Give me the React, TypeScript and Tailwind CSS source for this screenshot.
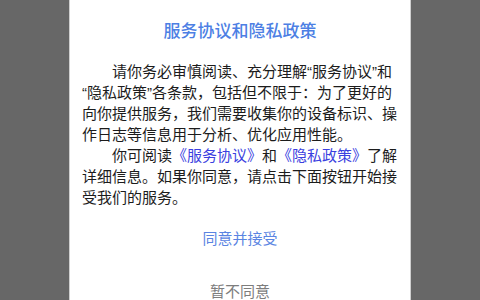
export default function App() {
  return (
    <main
      className="flex h-[300px] justify-center overflow-hidden bg-[#676767]"
      style={{ fontFamily: '"Liberation Sans", "Noto Sans CJK SC", sans-serif' }}
    >
      <div className="flex w-[342px] flex-col border-x border-[#cfcfcf] bg-white">
        {/* Title */}
        <h1 className="pt-[20px] text-center text-[17px] leading-[24px] font-medium text-[#4d7fe4]">
          服务协议和隐私政策
        </h1>

        {/* Body */}
        <div className="mt-[17px] px-[12px] text-[15px] leading-[21px] text-[#1c1c1c]">
          <p className="indent-[30px]">
            请你务必审慎阅读、充分理解“服务协议”和<wbr />“隐私政策”各条款，包括但不限于：为了更好的向你提供服务，我们需要收集你的设备标识、操作日志等信息用于分析、优化应用性能。
          </p>
          <p className="indent-[30px]">
            你可阅读<span className="text-[#3b3fe0]">《服务协议》</span>和
            <span className="text-[#3b3fe0]">《隐私政策》</span>
            了解详细信息。如果你同意，请点击下面按钮开始接受我们的服务。
          </p>
        </div>

        {/* Actions */}
        <div className="mt-[5px] flex flex-col">
          <button
            type="button"
            className="h-[53px] text-center text-[15px] text-[#5a84e2]"
          >
            同意并接受
          </button>
          <button
            type="button"
            className="h-[53px] text-center text-[15px] text-[#7d7d7d]"
          >
            暂不同意
          </button>
        </div>
      </div>
    </main>
  );
}
